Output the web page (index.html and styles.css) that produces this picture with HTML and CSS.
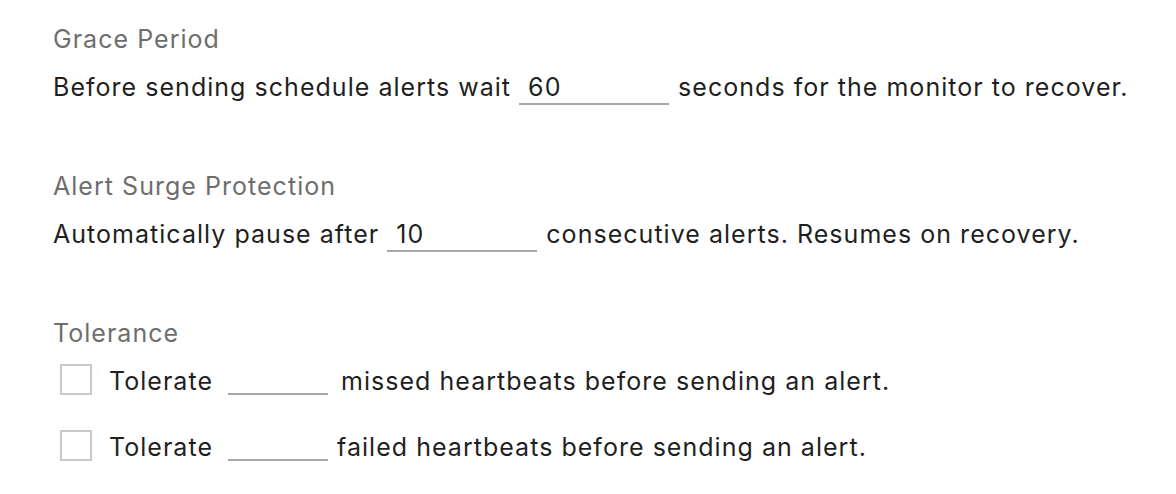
FILE: index.html
```html
<!DOCTYPE html>
<html>
<head>
<meta charset="utf-8">
<link rel="stylesheet" href="styles.css">
</head>
<body>
<div class="page">
  <section class="group">
    <h3 class="label">Grace Period</h3>
    <div class="line">
      <span>Before sending schedule alerts wait</span>
      <span class="field wide">60</span>
      <span>seconds for the monitor to recover.</span>
    </div>
  </section>
  <section class="group">
    <h3 class="label">Alert Surge Protection</h3>
    <div class="line">
      <span>Automatically pause after</span>
      <span class="field wide">10</span>
      <span>consecutive alerts. Resumes on recovery.</span>
    </div>
  </section>
  <section class="group last">
    <h3 class="label">Tolerance</h3>
    <div class="line check-row first">
      <span class="box"></span>
      <span class="tol">Tolerate</span>
      <span class="field narrow"></span>
      <span class="after">missed heartbeats before sending an alert.</span>
    </div>
    <div class="line check-row second">
      <span class="box"></span>
      <span class="tol">Tolerate</span>
      <span class="field narrow"></span>
      <span class="after2">failed heartbeats before sending an alert.</span>
    </div>
  </section>
</div>
</body>
</html>
```
FILE: styles.css
```css
html, body {
  margin: 0;
  padding: 0;
  background: #ffffff;
}
body {
  font-family: Inter, "Noto Sans", sans-serif;
  color: #1f1f1f;
  font-size: 25px;
  letter-spacing: 1.03px;
}
.page {
  padding: 21px 0 0 53px;
}
.group {
  margin-bottom: 63px;
}
.group.last {
  margin-bottom: 0;
}
.label {
  margin: 0 0 12px 0;
  font-weight: 400;
  font-size: 25px;
  color: #6e6e6e;
  line-height: 36px;
}
.line {
  display: flex;
  align-items: flex-end;
  height: 36px;
  line-height: 36px;
  white-space: nowrap;
}
.field {
  display: inline-block;
  height: 36px;
  border-bottom: 2px solid #a8a8a8;
  box-sizing: border-box;
  padding-left: 9px;
  margin: 0 9px 0 8px;
}
.wide { width: 150px; }
.narrow {
  width: 100px;
  height: 32px;
  margin-left: 15px;
  margin-right: 13px;
  align-self: flex-start;
}
.box {
  width: 32px;
  height: 31px;
  box-sizing: border-box;
  border: 2px solid #c8c8c8;
  margin: 1px 17px 0 7px;
  align-self: flex-start;
}
.check-row.first { margin-top: 2px; }
.check-row.second { margin-top: 30px; }
.after2 { margin-left: -4px; }
```
